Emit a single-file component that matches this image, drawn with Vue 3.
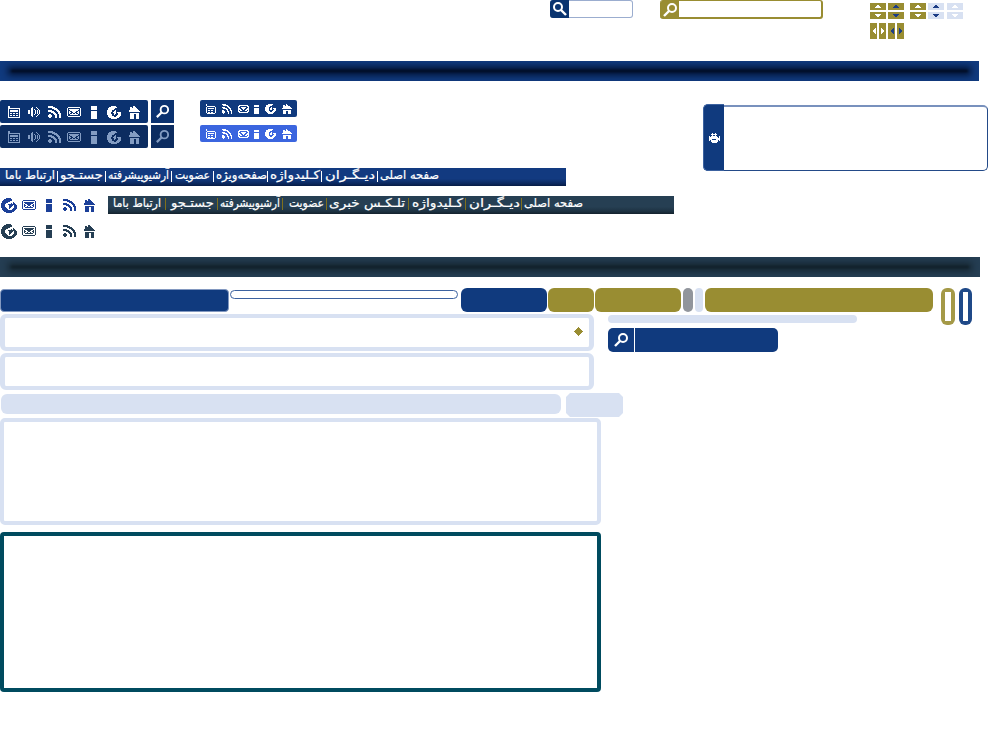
<script setup>
import { h } from 'vue'

// Each glyph is a small bitmap; every '#' is one filled pixel.
const glyphs = {
  phone: ['##..........', '##..........', '############', '#..........#', '#.########.#', '#.########.#', '#..........#', '#.##.##.##.#', '#..........#', '#.##.##.##.#', '#..........#', '############'],
  sound: ['....#...#...', '...##....#..', '...##.#...#.', '##.##..#.#.#', '##.##..#.#.#', '##.##..#.#.#', '##.##..#.#.#', '...##.#...#.', '...##....#..', '....#...#...'],
  rss: ['#####........', '#######......', '....#####....', '......####...', '####....###..', '######...###.', '...####...##.', '.....###..###', '.##...###..##', '####...##..##', '####...##..##', '.##....##..##'],
  mail: ['.############.', '#............#', '#.##########.#', '#..########..#', '#.#..####..#.#', '#.##..##..##.#', '#.#..#..#..#.#', '#..########..#', '#............#', '.############.'],
  info: ['######', '######', '######', '######', '......', '######', '######', '######', '######', '######', '######', '######', '######'],
  globe: ['....#####.....', '..########....', '.#######......', '.######.......', '#####...#.....', '#####..##.....', '####..###.####', '####...##..###', '#####..#...###', '.####.....####', '.######..####.', '..##########..', '....######....'],
  bigGlobe: ['.....#####......', '...########.....', '..#########.....', '.########.......', '.######.....#...', '#####.....#.##..', '####...########.', '####....####.###', '####....###..###', '#####...##...###', '.#####..#...####', '.######....####.', '..############..', '...##########...', '.....######.....'],
  home: ['....##.....', '.##.###....', '.#######...', '.########..', '##########.', '###########', '...........', '.#########.', '.####..###.', '.####..###.', '.####..###.', '.####..###.', '.####..###.'],
  phoneSm: ['#.........', '#.........', '.########.', '#........#', '#.######.#', '#........#', '#.##.##..#', '#........#', '#.##.##..#', '.########.'],
  rssSm: ['####......', '.#####....', '.....##...', '###...##..', '.####..##.', '....##..#.', '##...#..##', '###..##..#', '###...#..#', '.#....#..#'],
  mailSm: ['.#########.', '##.......##', '#..#####..#', '##..###..##', '###..#..###', '#.##...##.#', '##.......##', '.#########.'],
  infoSm: ['#####', '#####', '.....', '#####', '#####', '#####', '#####', '#####', '#####'],
  globeSm: ['...#####...', '.######....', '.####......', '####..#....', '####.##.###', '####.##..##', '####....###', '.####..###.', '..#######..', '...#####...'],
  homeSm: ['....#.....', '.##.##....', '.#######..', '.########.', '##########', '..........', '.########.', '.###..###.', '.###..###.', '.###..###.'],
  robot: ['...#..#....', '..######...', '...#..#....', '#.######..#', '#########.#', '###########', '###....####', '#.#######.#', '..#######..', '...#####...'],
  diamond: ['....#....', '...###...', '..#####..', '.#######.', '#########', '.#######.', '..#####..', '...###...', '....#....'],
  up: ['...##...', '..####..', '.######.'],
  down: ['.######.', '..####..', '...##...'],
  left: ['...#', '..##', '.###', '.###', '..##', '...#'],
  right: ['#...', '##..', '###.', '###.', '##..', '#...'],
}

const Glyph = ({ name }) => {
  const rows = glyphs[name]
  let d = ''
  rows.forEach((row, y) => {
    for (const run of row.matchAll(/#+/g)) d += `M${run.index} ${y}h${run[0].length}v1h-${run[0].length}z`
  })
  const w = rows[0].length
  return h('svg', { width: w, height: rows.length, viewBox: `0 0 ${w} ${rows.length}`, 'shape-rendering': 'crispEdges' }, [
    h('path', { d, fill: 'currentColor' }),
  ])
}
Glyph.props = ['name']

const Lens = ({ flip }) =>
  h('svg', { width: 16, height: 16, viewBox: '0 0 16 16', fill: 'none', stroke: 'currentColor' }, [
    h('circle', { cx: flip ? 6 : 10, cy: 6, r: 4, 'stroke-width': 2 }),
    h('path', { d: flip ? 'M9 9l5 5' : 'M7 9l-5 5', 'stroke-width': 2.4 }),
  ])
Lens.props = { flip: Boolean }

const tools = ['phone', 'sound', 'rss', 'mail', 'info', 'globe', 'home']
const smallTools = ['phoneSm', 'rssSm', 'mailSm', 'infoSm', 'globeSm', 'homeSm']
const links = ['bigGlobe', 'mail', 'info', 'rss', 'home']

// w: cell width, x: text start inside the cell, len: text width
const blueMenu = [
  { t: 'ارتباط باما', w: 58, x: 5, len: 50 },
  { t: 'جستـجو', w: 48, x: 2, len: 43 },
  { t: 'آرشیوپیشرفته', w: 66, x: 2, len: 61 },
  { t: 'عضویت', w: 42, x: 3, len: 35 },
  { t: 'صفحه‌ویژه', w: 54, x: 2, len: 51 },
  { t: 'کـلیدواژه', w: 54, x: 2, len: 50 },
  { t: 'دیـگـران', w: 56, x: 3, len: 50 },
  { t: 'صفحه اصلی', w: 64, x: 2, len: 59 },
]
const tealMenu = [
  { t: 'ارتباط باما', w: 58, x: 5, len: 48 },
  { t: 'جستـجو', w: 52, x: 5, len: 43 },
  { t: 'آرشیوپیشرفته', w: 65, x: 2, len: 60 },
  { t: 'عضویت', w: 44, x: 6, len: 35 },
  { t: 'تلـکـس خبری', w: 82, x: 2, len: 76 },
  { t: 'کـلیدواژه', w: 57, x: 3, len: 51 },
  { t: 'دیـگـران', w: 56, x: 3, len: 51 },
  { t: 'صفحه اصلی', w: 64, x: 2, len: 59 },
]
</script>

<template>
  <main class="page">
    <header class="top">
      <div class="search navy"><span><Lens flip /></span></div>
      <div class="search olive"><span><Lens /></span></div>
      <div class="arrows">
        <div class="pairs">
          <div v-for="n in 5" :key="n" :class="['pair', 'p' + n]">
            <i><Glyph name="up" /></i><i><Glyph name="down" /></i>
          </div>
        </div>
        <div class="sides">
          <i><Glyph name="left" /></i><i><Glyph name="right" /></i>
          <i class="ink"><Glyph name="left" /></i><i class="ink"><Glyph name="right" /></i>
        </div>
      </div>
    </header>

    <div class="band"><b></b></div>

    <section class="middle">
      <div class="left">
        <div class="toolsets">
          <div class="large">
            <div v-for="n in 2" :key="n" :class="['tool-row', { dim: n === 2 }]">
              <div class="tools"><span v-for="g in tools" :key="g"><Glyph :name="g" /></span></div>
              <div class="lens"><Lens /></div>
            </div>
          </div>
          <div class="small">
            <div v-for="n in 2" :key="n" :class="['mini', { bright: n === 2 }]">
              <span v-for="g in smallTools" :key="g"><Glyph :name="g" /></span>
            </div>
          </div>
        </div>
        <nav class="menu">
          <span v-for="m in blueMenu" :key="m.t" class="cell" :style="{ width: m.w + 'px' }">
            <svg :width="m.w" height="18"><text :x="m.x" y="11" :textLength="m.len" lengthAdjust="spacingAndGlyphs">{{ m.t }}</text></svg>
          </span>
        </nav>
        <div class="links-row">
          <div class="links"><span v-for="g in links" :key="g"><Glyph :name="g" /></span></div>
          <nav class="menu teal">
            <span v-for="m in tealMenu" :key="m.t" class="cell" :style="{ width: m.w + 'px' }">
              <svg :width="m.w" height="18"><text :x="m.x" y="11" :textLength="m.len" lengthAdjust="spacingAndGlyphs">{{ m.t }}</text></svg>
            </span>
          </nav>
        </div>
        <div class="links slate"><span v-for="g in links" :key="g"><Glyph :name="g" /></span></div>
      </div>
      <div class="card"><div class="tab"><Glyph name="robot" /></div></div>
    </section>

    <div class="band slate-band"><b></b></div>

    <div class="pills">
      <div class="title"></div>
      <div class="outline"></div>
      <div class="pill blue"></div>
      <div class="pill gold"></div>
      <div class="pill gold mid"></div>
      <div class="pill gray"></div>
      <div class="pill pale"></div>
      <div class="pill gold wide"></div>
      <div class="ring"><b></b></div>
      <div class="ring deep"><b></b></div>
    </div>

    <section class="content">
      <div class="boxes">
        <div class="frame marked"><Glyph name="diamond" /></div>
        <div class="frame"><b></b></div>
        <div class="strip"><div class="bar"></div><div class="chip"></div></div>
        <div class="panel"></div>
        <div class="panel dark"></div>
      </div>
      <aside>
        <div class="rail"></div>
        <div class="finder"><span><Lens /></span></div>
      </aside>
    </section>
  </main>
</template>

<style>
body { background: #fff; }
</style>

<style scoped>
* { box-sizing: border-box; }
svg { display: block; }
.page { width: 989px; height: 730px; overflow: hidden; font-family: "DejaVu Sans", sans-serif; }

.top { display: flex; align-items: flex-start; height: 61px; padding-left: 550px; }
.search { display: flex; }
.search span { display: flex; align-items: center; justify-content: center; color: #fff; }
.navy { width: 83px; height: 18px; border: 1px solid #9badcf; border-left: 0; border-radius: 3px; margin-right: 27px; }
.navy span { width: 19px; height: 18px; margin-top: -1px; background: #0a3470; border-radius: 3px 0 0 3px; }
.olive { width: 163px; height: 19px; border: 2px solid #998d32; border-top-width: 1px; border-left: 0; border-radius: 3px; margin-right: 47px; }
.olive span { width: 19px; height: 17px; background: #998d32; border-radius: 2px 0 0 2px; }
.arrows { padding-top: 3px; }
.pairs { display: flex; gap: 2px; }
.pair { display: flex; flex-direction: column; gap: 2px; color: #fff; }
.pair i { display: flex; align-items: center; justify-content: center; width: 16px; height: 7px; background: #998d32; }
.p2, .p4, .ink { color: #1c3d85; }
.p3 { margin-left: 4px; }
.p5 { margin-left: 1px; }
.p4 i, .p5 i { background: #d8e1f2; }
.sides { display: flex; gap: 2px; margin-top: 4px; color: #fff; }
.sides i { display: flex; align-items: center; justify-content: center; width: 7px; height: 16px; background: #998d32; }
.sides .ink { color: #1c3d85; }

.band { width: 979px; height: 20px; padding: 9px 11px; background: #103a7e; overflow: hidden; }
.band b { display: block; height: 2px; background: #00081a; filter: blur(1px); box-shadow: 0 0 6px 3px #00102e; }
.slate-band { width: 980px; background: #253e53; }
.slate-band b { background: #101e26; box-shadow: 0 0 6px 3px #14242e; }

.middle { display: flex; height: 176px; }
.left { width: 703px; padding-top: 19px; }
.toolsets { display: flex; height: 68px; }
.large { display: flex; flex-direction: column; gap: 2px; width: 200px; }
.tool-row { display: flex; gap: 3px; height: 23px; color: #fff; }
.tools { display: flex; width: 148px; padding: 1px 4px 0; background: #0b3270; border-radius: 2px; }
.tools span { display: flex; flex: 1; align-items: center; justify-content: center; }
.lens { display: flex; align-items: center; justify-content: center; width: 23px; background: #0b3270; }
.lens svg { width: 15px; height: 15px; }
.dim { color: #839cc2; }
.dim .tools, .dim .lens { background: #0c2c60; }
.small { display: flex; flex-direction: column; gap: 8px; }
.mini { display: flex; justify-content: space-between; align-items: center; width: 97px; height: 17px; padding: 1px 5px 0 6px; background: #103a7e; border-radius: 2px; color: #fff; }
.bright { background: #3b65df; }

.menu { display: flex; width: 566px; height: 18px; background: linear-gradient(#123a80 60%, #0b2960 85%, #061b45); }
.cell { display: block; flex: none; position: relative; }
.cell svg { overflow: visible; }
.cell:not(:last-child)::after { content: ""; position: absolute; right: 0; top: 3px; width: 1px; height: 11px; background: #fff; }
.menu text { fill: #fff; stroke: #fff; stroke-width: 0.2px; font-size: 12px; direction: ltr; }
.teal { background: linear-gradient(#263f53 60%, #1d3242 85%, #13222d); }
.teal .cell:not(:last-child)::after { background: #80701c; top: 2px; height: 12px; }
.links-row { display: flex; height: 28px; padding-top: 10px; }
.links { display: flex; width: 108px; height: 18px; color: #1b3f98; }
.links span { display: flex; width: 20px; align-items: center; justify-content: center; }
.links span:first-child { width: 19px; padding-right: 2px; }
.slate { margin-top: 8px; color: #253e53; }

.card { width: 285px; height: 66px; margin-top: 24px; border: 1px solid #234a88; border-top: 2px solid #7891bd; border-left: 0; border-radius: 5px; }
.tab { display: flex; align-items: center; justify-content: center; width: 21px; height: 67px; margin-top: -3px; background: #103a7e; border: 1px solid #3c62a0; border-right: 0; border-radius: 5px 0 0 5px; color: #fff; }

.pills { display: flex; align-items: flex-start; height: 37px; padding-top: 11px; }
.title { width: 229px; height: 23px; margin: 1px 1px 0 0; background: #103a7e; border: 1px solid #8298c0; border-radius: 4px; }
.outline { width: 228px; height: 9px; margin: 2px 3px 0 0; border: 1px solid #3c62a0; border-radius: 5px; }
.pill { height: 24px; border-radius: 6px; }
.blue { width: 86px; background: #103a7e; margin-right: 1px; }
.gold { width: 46px; background: #998d32; margin-right: 1px; }
.mid { width: 86px; margin-right: 2px; }
.gray { width: 10px; background: #91959c; border-radius: 5px; margin-right: 2px; }
.pale { width: 8px; background: #d8e1f2; border-radius: 4px; margin-right: 2px; }
.wide { width: 228px; margin-right: 8px; }
.ring { width: 14px; height: 37px; padding: 4px; border-radius: 6px; margin-right: 4px; background: #a49947; }
.ring b { display: block; height: 29px; background: #fff; }
.deep { width: 13px; background: #1f4988; margin: 0; }

.content { display: flex; }
.boxes { width: 608px; }
.frame { width: 594px; height: 37px; margin-bottom: 2px; border: solid #d8e1f2; border-width: 4px 5px; border-radius: 6px; }
.marked { display: flex; justify-content: flex-end; padding: 9px 6px 0 0; color: #998d32; }
.strip { display: flex; align-items: flex-start; width: 623px; height: 26px; padding: 1px 0 0 1px; }
.bar { width: 560px; height: 20px; margin: 1px 5px 0 0; border-radius: 6px; background: #d8e1f2; }
.chip { width: 57px; height: 24px; background: #d8e1f2; clip-path: polygon(4px 0, 53px 0, 100% 4px, 100% 20px, 53px 100%, 4px 100%, 0 20px, 0 4px); }
.panel { width: 601px; height: 107px; border: 4px solid #d8e1f2; border-radius: 5px; }
.dark { height: 160px; margin-top: 7px; border-color: #004b5f; border-radius: 4px; }
aside { padding-top: 1px; }
.rail { width: 249px; height: 8px; border-radius: 4px; background: #d8e1f2; }
.finder { display: flex; width: 170px; height: 24px; margin-top: 5px; background: #103a7e; border-radius: 5px; color: #fff; }
.finder span { display: flex; align-items: center; justify-content: center; width: 27px; border-right: 1px solid #fff; }
</style>
